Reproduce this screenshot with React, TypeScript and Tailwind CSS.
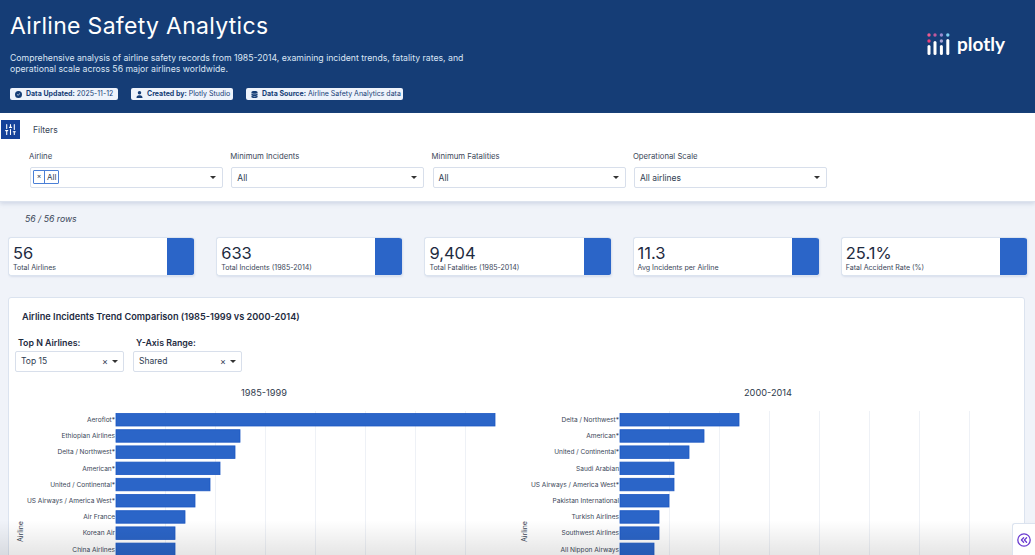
import { SlidersVertical } from "lucide-react";
import { FaCircleCheck, FaDatabase, FaUser } from "react-icons/fa6";

const font = { fontFamily: "Inter, sans-serif" };

const chips = [
  { icon: FaCircleCheck, label: "Data Updated:", value: " 2025-11-12", cls: "w-[108px]" },
  { icon: FaUser, label: "Created by:", value: " Plotly Studio", cls: "w-[102px]" },
  { icon: FaDatabase, label: "Data Source:", value: " Airline Safety Analytics data", cls: "w-[157px]" },
];

const metrics = [
  { value: "56", label: "Total Airlines" },
  { value: "633", label: "Total Incidents (1985-2014)" },
  { value: "9,404", label: "Total Fatalities (1985-2014)" },
  { value: "11.3", label: "Avg Incidents per Airline" },
  { value: "25.1%", label: "Fatal Accident Rate (%)" },
];

const filters = [
  { label: "Airline", value: "" },
  { label: "Minimum Incidents", value: "All" },
  { label: "Minimum Fatalities", value: "All" },
  { label: "Operational Scale", value: "All airlines" },
];

const left = [
  ["Aeroflot*", 379],
  ["Ethiopian Airlines", 124],
  ["Delta / Northwest*", 119],
  ["American*", 104],
  ["United / Continental*", 94],
  ["US Airways / America West*", 79],
  ["Air France", 69],
  ["Korean Air", 59],
  ["China Airlines", 59],
] as const;

const right = [
  ["Delta / Northwest*", 119],
  ["American*", 84],
  ["United / Continental*", 69],
  ["Saudi Arabian", 54],
  ["US Airways / America West*", 54],
  ["Pakistan International", 49],
  ["Turkish Airlines", 39],
  ["Southwest Airlines", 39],
  ["All Nippon Airways", 34],
] as const;

function Caret() {
  return <span className="h-0 w-0 border-x-[3px] border-t-[3px] border-x-transparent border-t-[#333]" />;
}

function PlotlyLogo() {
  return (
    <div className="flex items-center gap-[5.5px]">
      <svg width="24" height="24" viewBox="0 0 24 24">
        <circle cx="2" cy="2" r="1.7" fill="#ef5a8f" />
        <circle cx="8" cy="2" r="1.7" fill="#c05a9c" />
        <circle cx="14.4" cy="2" r="1.7" fill="#9a8cd0" />
        <circle cx="20.8" cy="2" r="1.7" fill="#7fd0f0" />
        <circle cx="2" cy="8" r="1.7" fill="#ef3f78" />
        <circle cx="14.4" cy="8" r="1.7" fill="#a9a6d8" />
        <rect x="0.5" y="12" width="3" height="10" rx="1.5" fill="#fff" />
        <rect x="6.5" y="8" width="3" height="14" rx="1.5" fill="#fff" />
        <rect x="12.9" y="12" width="3" height="10" rx="1.5" fill="#fff" />
        <rect x="19.3" y="6" width="3" height="16" rx="1.5" fill="#fff" />
      </svg>
      <span className="-mt-[3px] text-[19px] leading-none font-bold text-white" style={{ fontFamily: "Lato, sans-serif" }}>
        plotly
      </span>
    </div>
  );
}

function BarChart({ title, rows, width, gridEnd }: { title: string; rows: readonly (readonly [string, number])[]; width: number; gridEnd: number }) {
  const axisX = 107;
  const grid: number[] = [];
  for (let x = axisX + 49; x < gridEnd; x += 50) grid.push(x);
  return (
    <svg width={width} height={185} className="shrink-0 overflow-visible" style={font}>
      <text x={255} y={14} textAnchor="middle" fontSize="9.2" fill="#2f3a4c">
        {title}
      </text>
      {grid.map((x) => (
        <line key={x} x1={x + 0.5} x2={x + 0.5} y1={29} y2={185} stroke="#eef1f6" />
      ))}
      {rows.map(([name, w], i) => (
        <g key={name}>
          <text x={axisX - 1} y={40 + i * 16.2} textAnchor="end" fontSize="6.55" fill="#3a4658">
            {name}
          </text>
          <rect x={axisX} y={31.5 + i * 16.2} width={w} height={12.5} fill="#2b65c8" stroke="#1d58c2" strokeWidth="0.8" />
        </g>
      ))}
      <text transform="translate(14 160) rotate(-90)" textAnchor="start" fontSize="7" fill="#3a4658">
        Airline
      </text>
    </svg>
  );
}

export default function App() {
  return (
    <div className="relative h-[555px] w-[1035px] overflow-hidden bg-[#f0f3f9]" style={font}>
      <header className="flex h-[113px] items-start justify-between bg-[#153d76] pl-[10px] pr-[30px] pt-[11px]">
        <div>
          <h1 className="text-[23px] leading-[30px] font-normal tracking-[0.3px] text-white">Airline Safety Analytics</h1>
          <p className="mt-[12px] w-[470px] text-[8.7px] leading-[11px] text-[#dbe6f5]">
            Comprehensive analysis of airline safety records from 1985-2014, examining incident trends, fatality rates, and operational scale across 56 major airlines worldwide.
          </p>
          <div className="mt-[13px] flex gap-[13px]">
            {chips.map((c) => (
              <div key={c.label} className={`flex h-[12px] items-center gap-[4px] rounded-[2px] bg-[#eef3fb] pl-[5px] text-[7px] whitespace-pre text-[#153d76] ${c.cls}`}>
                <c.icon className="h-[7px] w-[7px] shrink-0" />
                <span>
                  <b className="font-bold">{c.label}</b>
                  {c.value}
                </span>
              </div>
            ))}
          </div>
        </div>
        <div className="pt-[22px]">
          <PlotlyLogo />
        </div>
      </header>

      <section className="h-[89px] border-b border-[#dde3ee] bg-white shadow-[0_2px_4px_rgba(120,140,180,0.25)]">
        <div className="flex items-center gap-[13px] pl-[1px] pt-[7px]">
          <div className="flex h-[19px] w-[19px] items-center justify-center bg-[#15429a]">
            <SlidersVertical className="h-[13px] w-[13px] text-white" strokeWidth={2} />
          </div>
          <span className="pt-[2px] text-[8.6px] text-[#3a4658]">Filters</span>
        </div>
        <div className="mt-[12px] flex pl-[29px]">
          {filters.map((f) => (
            <div key={f.label} className="w-[201.3px]">
              <div className="text-[7.75px] leading-[10px] text-[#3a4658]">{f.label}</div>
              <div className="ml-[1px] mt-[6px] flex h-[21px] w-[193px] items-center justify-between rounded-[2px] border border-[#d8dfeb] bg-white pl-[5px] pr-[6px] text-[8.5px] text-[#2f3d52]">
                {f.value ? (
                  <span className="pt-[2px]">{f.value}</span>
                ) : (
                  <span className="-ml-[3px] -mt-[2px] flex h-[14px] items-center rounded-[1px] border border-[#4a7fd6] text-[8px]">
                    <span className="flex h-full w-[11px] items-center justify-center border-r border-[#4a7fd6] text-[7px]">×</span>
                    <span className="px-[2px]">All</span>
                  </span>
                )}
                <Caret />
              </div>
            </div>
          ))}
        </div>
      </section>

      <div className="pl-[25px] pt-[11px] text-[8.7px] leading-[12px] text-[#3a4658] italic">56 / 56 rows</div>

      <div className="mt-[12px] grid grid-cols-5 gap-[22px] px-[8px]">
        {metrics.map((m) => (
          <div key={m.label} className="flex h-[39px] overflow-hidden rounded-[3px] border border-r-0 border-[#dbe3ef] bg-white shadow-[1px_1px_2px_rgba(120,140,180,0.2)]">
            <div className="flex-1 pl-[4px] pt-[6px]">
              <div className="text-[16.5px] leading-[18px] text-[#1e2b3f]">{m.value}</div>
              <div className="pt-[1px] text-[7.05px] leading-[10px] text-[#3a4658]">{m.label}</div>
            </div>
            <div className="w-[27px] bg-[#2b65c8]" />
          </div>
        ))}
      </div>

      <section className="ml-[8px] mr-[10px] mt-[21px] h-[300px] rounded-[3px] border border-[#dbe3ef] bg-white">
        <h2 className="pl-[13px] pt-[13px] text-[9.2px] leading-[12px] font-semibold text-[#1e2b3f]">
          Airline Incidents Trend Comparison (1985-1999 vs 2000-2014)
        </h2>
        <div className="mt-[14px] flex gap-[9px] pl-[6px]">
          {[
            { label: "Top N Airlines:", value: "Top 15" },
            { label: "Y-Axis Range:", value: "Shared" },
          ].map((d) => (
            <div key={d.label} className="w-[109px]">
              <div className="pl-[3px] text-[8.8px] leading-[11px] font-semibold text-[#1e2b3f]">{d.label}</div>
              <div className="mt-[3px] flex h-[21px] items-center justify-between rounded-[2px] border border-[#d8dfeb] pl-[5px] pr-[5px] text-[8.5px] text-[#2f3d52]">
                <span className="-mt-[1px]">{d.value}</span>
                <span className="flex items-center gap-[4px]">
                  <span className="text-[9px] leading-none">×</span>
                  <Caret />
                </span>
              </div>
            </div>
          ))}
        </div>
        <div className="mt-[10px] flex">
          <BarChart title="1985-1999" rows={left} width={504} gridEnd={506} />
          <BarChart title="2000-2014" rows={right} width={500} gridEnd={492} />
        </div>
      </section>

      <div className="absolute inset-x-0 bottom-0 h-[35px] bg-gradient-to-b from-transparent to-black/10" />

      <div className="absolute bottom-0 right-0 flex h-[32px] w-[23px] items-start justify-center rounded-tl-[3px] border-l border-t border-[#dbe3ef] bg-white pt-[9px]">
        <svg width="14" height="14" viewBox="0 0 14 14" fill="none" stroke="#6a3bd0" strokeWidth="1.3" strokeLinecap="round" strokeLinejoin="round">
          <circle cx="7" cy="7" r="6.2" />
          <path d="M6.6 4.8 4.4 7l2.2 2.2M9.6 4.8 7.4 7l2.2 2.2" />
        </svg>
      </div>
    </div>
  );
}
